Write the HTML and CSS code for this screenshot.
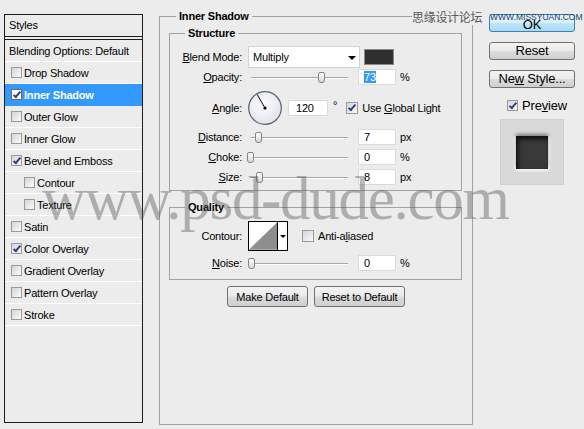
FILE: index.html
```html
<!DOCTYPE html>
<html lang="en">
<head>
<meta charset="UTF-8">
<title>Layer Style</title>
<link rel="stylesheet" href="styles.css">
</head>
<body>
<div class="dialog">
  <div class="styles">
    <div class="head">Styles</div>
    <div class="item">Blending Options: Default</div>
    <div class="item"><span class="cb"></span>Drop Shadow</div>
    <div class="item active"><span class="cb on"></span>Inner Shadow</div>
    <div class="item"><span class="cb"></span>Outer Glow</div>
    <div class="item"><span class="cb"></span>Inner Glow</div>
    <div class="item"><span class="cb on"></span>Bevel and Emboss</div>
    <div class="item sub-item"><span class="cb"></span>Contour</div>
    <div class="item sub-item"><span class="cb"></span>Texture</div>
    <div class="item"><span class="cb"></span>Satin</div>
    <div class="item"><span class="cb on"></span>Color Overlay</div>
    <div class="item"><span class="cb"></span>Gradient Overlay</div>
    <div class="item"><span class="cb"></span>Pattern Overlay</div>
    <div class="item"><span class="cb"></span>Stroke</div>
  </div>

  <fieldset class="group main">
    <legend>Inner Shadow</legend>

    <fieldset class="group sub structure">
      <legend>Structure</legend>
      <div class="row">
        <span class="lbl"><u>B</u>lend Mode:</span>
        <div class="select">Multiply<span class="arrow"></span></div>
        <span class="swatch"></span>
      </div>
      <div class="row">
        <span class="lbl"><u>O</u>pacity:</span>
        <div class="slider"><span class="thumb" style="left:74px"></span></div>
        <span class="num"><span class="sel">73</span></span>
        <span class="unit">%</span>
      </div>
      <div class="row angle">
        <span class="lbl"><u>A</u>ngle:</span>
        <svg class="dial" width="34" height="34" viewBox="0 0 34 34">
          <defs>
            <radialGradient id="dialbg" cx="45%" cy="40%" r="60%">
              <stop offset="0" stop-color="#ffffff"/>
              <stop offset="1" stop-color="#e2e4ea"/>
            </radialGradient>
          </defs>
          <circle cx="17" cy="17" r="16.3" fill="url(#dialbg)" stroke="#566077" stroke-width="1.2"/>
          <line x1="17" y1="17" x2="9.2" y2="3.5" stroke="#000" stroke-width="1"/>
          <circle cx="17" cy="17" r="1.6" fill="#000"/>
        </svg>
        <span class="num wide">120</span>
        <span class="deg">°</span>
        <span class="cb big on"></span>
        <span class="cb-text">Use <u>G</u>lobal Light</span>
      </div>
      <div class="row">
        <span class="lbl"><u>D</u>istance:</span>
        <div class="slider"><span class="thumb" style="left:11px"></span></div>
        <span class="num">7</span>
        <span class="unit">px</span>
      </div>
      <div class="row">
        <span class="lbl"><u>C</u>hoke:</span>
        <div class="slider"><span class="thumb" style="left:3px"></span></div>
        <span class="num">0</span>
        <span class="unit">%</span>
      </div>
      <div class="row">
        <span class="lbl"><u>S</u>ize:</span>
        <div class="slider"><span class="thumb" style="left:12px"></span></div>
        <span class="num">8</span>
        <span class="unit">px</span>
      </div>
    </fieldset>

    <fieldset class="group sub quality">
      <legend>Quality</legend>
      <div class="row contour-row">
        <span class="lbl">Contour:</span>
        <div class="contour">
          <svg width="29" height="28" viewBox="0 0 29 28">
            <polygon points="0,28 29,0 29,28" fill="#8e8e8e"/>
          </svg>
          <span class="contour-drop"><span class="arrow small"></span></span>
        </div>
        <span class="cb big aa"></span>
        <span class="cb-text">Anti-a<u>l</u>iased</span>
      </div>
      <div class="row">
        <span class="lbl"><u>N</u>oise:</span>
        <div class="slider"><span class="thumb" style="left:4px"></span></div>
        <span class="num">0</span>
        <span class="unit">%</span>
      </div>
    </fieldset>

    <div class="defaults">
      <button class="btn make">Make Default</button>
      <button class="btn reset-def">Reset to Default</button>
    </div>
  </fieldset>

  <div class="side">
    <button class="btn big-btn ok">OK</button>
    <button class="btn big-btn">Reset</button>
    <button class="btn big-btn">Ne<u>w</u> Style...</button>
    <div class="preview-check"><span class="cb on"></span><span>Pre<u>v</u>iew</span></div>
    <div class="preview"><div class="swatch-preview"></div></div>
  </div>
</div>

<div class="wm-site">www.psd-dude.com</div>
<div class="wm-cn">思缘设计论坛</div>
<div class="wm-url">WWW.MISSYUAN.COM</div>
</body>
</html>
```

FILE: styles.css
```css
body {
  margin: 0;
  background-color: #ececec;
  font-family: "Liberation Sans", Arial, sans-serif;
  font-size: 11px;
  letter-spacing: -0.2px;
  color: #000;
  overflow: hidden;
}
.dialog {
  display: flex;
  align-items: flex-start;
  padding: 10px 0 0 4px;
  height: 429px;
  box-sizing: border-box;
}

/* left list of styles */
.styles {
  width: 139px;
  height: 409px;
  margin: 4px 16px 0 0;
  border: 1px solid #1c1c1c;
  box-sizing: border-box;
  flex: none;
}
.styles .head {
  height: 21px;
  line-height: 21px;
  padding-left: 4px;
  border-bottom: 4px double #1c1c1c;
}
.item {
  height: 21px;
  border-bottom: 1px solid #fff;
  display: flex;
  align-items: center;
  gap: 2px;
  padding-left: 4px;
}
.item .cb {
  margin-left: 2px;
}
.item.sub-item {
  padding-left: 17px;
}
.item.active {
  background-color: #3399ff;
  color: #fff;
  font-weight: bold;
  border-bottom-color: #3399ff;
}
.item.active .cb {
  background: #fff;
  border-color: #6b6b6b;
}

/* checkboxes */
.cb {
  position: relative;
  flex: none;
  width: 11px;
  height: 11px;
  box-sizing: border-box;
  border: 1px solid #9a9a9a;
  background: linear-gradient(135deg, #d4d4d4, #fbfbfb);
}
.cb.big {
  width: 12px;
  height: 12px;
}
.cb.on::after {
  content: "";
  position: absolute;
  left: 3px;
  top: 0;
  width: 2px;
  height: 6px;
  border: solid #2c3f8f;
  border-width: 0 2px 2px 0;
  transform: rotate(40deg);
}
.cb-text {
  margin-left: 4px;
}

/* group boxes */
.group {
  margin: 0;
  padding: 0;
  border: 1px solid #a2a2a2;
  min-width: 0;
  box-sizing: border-box;
}
.group legend {
  font-weight: bold;
  padding: 0 3px;
  line-height: 12px;
}
.main {
  width: 314px;
  height: 415px;
  padding: 5px 9px 0;
  margin-right: 16px;
  flex: none;
}
.main > legend {
  margin-left: 7px;
}
.sub {
  width: 293px;
}
.sub > legend {
  margin-left: 15px;
}
.structure {
  padding: 8px 0 3px;
}
.quality {
  margin-top: 10px;
  padding: 8px 0 6px;
}

.row {
  display: flex;
  align-items: center;
  height: 20px;
}
.lbl {
  width: 72px;
  margin-right: 6px;
  text-align: right;
  flex: none;
}
.row.angle {
  height: 40px;
  padding-top: 2px;
  box-sizing: border-box;
}
.contour-row {
  height: 30px;
  margin-bottom: 2px;
}

.select {
  width: 112px;
  height: 22px;
  box-sizing: border-box;
  background: #fff;
  border: 1px solid #d2d2d2;
  display: flex;
  align-items: center;
  padding-left: 4px;
}
.arrow {
  margin: 1px 3px 0 auto;
  border-left: 4px solid transparent;
  border-right: 4px solid transparent;
  border-top: 4px solid #000;
}
.arrow.small {
  margin: 0;
  border-left-width: 3px;
  border-right-width: 3px;
  border-top-width: 3px;
}
.swatch {
  width: 30px;
  height: 16px;
  margin-left: 4px;
  background: #2f2f2f;
  border: 1px solid #8a8a8a;
  box-sizing: border-box;
}

.slider {
  position: relative;
  width: 104px;
  height: 13px;
  flex: none;
}
.slider::before {
  content: "";
  position: absolute;
  left: 3px;
  right: 4px;
  top: 6px;
  height: 1px;
  background: #a6a6a6;
  box-shadow: 0 1px 0 #fff;
}
.thumb {
  position: absolute;
  top: 1px;
  width: 7px;
  height: 11px;
  margin-left: -4px;
  box-sizing: border-box;
  border: 1px solid #858585;
  border-radius: 2px 2px 3px 3px;
  background: linear-gradient(#ffffff, #d6d6d6);
}

.num {
  width: 38px;
  height: 16px;
  margin-left: 6px;
  box-sizing: border-box;
  background: #fff;
  border: 1px solid #dadada;
  padding-left: 5px;
  line-height: 14px;
  flex: none;
}
.num.wide {
  width: 40px;
  margin-left: 6px;
  padding-left: 7px;
}
.num .sel {
  background: #3399ff;
  color: #fff;
}
.unit {
  margin-left: 4px;
}
.deg {
  margin: 0 0 7px 5px;
}
.angle .cb {
  margin-left: 9px;
}
.dial {
  display: block;
  flex: none;
}

.contour {
  width: 40px;
  height: 30px;
  box-sizing: border-box;
  border: 1px solid #000;
  background: #fff;
  display: flex;
  flex: none;
}
.contour svg {
  display: block;
}
.contour-drop {
  width: 9px;
  border-left: 1px solid #000;
  display: flex;
  align-items: center;
  justify-content: center;
}
.cb.aa {
  margin-left: 14px;
}

/* buttons */
.defaults {
  display: flex;
  justify-content: center;
  gap: 6px;
  margin-top: 6px;
}
.btn {
  height: 21px;
  padding: 0;
  font-family: inherit;
  font-size: 11px;
  letter-spacing: -0.2px;
  color: #000;
  border: 1px solid #707070;
  border-radius: 3px;
  background: linear-gradient(#f3f3f3 0%, #ebebeb 48%, #dcdcdc 52%, #cfcfcf 100%);
}
.btn.make {
  width: 81px;
}
.btn.reset-def {
  width: 91px;
}

.side {
  width: 86px;
  margin-top: 4px;
  display: flex;
  flex-direction: column;
  align-items: center;
  flex: none;
}
.big-btn {
  width: 86px;
  height: 18px;
  margin-bottom: 10px;
  font-size: 13px;
  line-height: 14px;
}
.btn.ok {
  border-color: #3c7fb1;
  padding-top: 3px;
  background: linear-gradient(#eaf6fd 0%, #d9f0fc 48%, #bee6fd 52%, #a7d9f5 100%);
}
.preview-check {
  display: flex;
  align-items: center;
  gap: 4px;
  font-size: 13px;
  margin: 1px 0 0 10px;
  height: 12px;
}
.preview {
  width: 64px;
  height: 66px;
  margin-top: 8px;
  box-sizing: border-box;
  background: #d9d9d9;
  border: 1px solid #cfcfcf;
  display: flex;
  align-items: center;
  justify-content: center;
}
.swatch-preview {
  width: 32px;
  height: 33px;
  background: #393939;
  box-shadow: inset 2px 3px 5px #0d0d0d, 0 -2px 3px rgba(0, 0, 0, 0.45), 0 2px 2px #fafafa, 2px 0 2px #fafafa, -2px 0 2px #fafafa;
}

/* watermarks over the screenshot */
.wm-site {
  position: absolute;
  left: 42px;
  top: 164px;
  font-family: "Liberation Serif", "Times New Roman", serif;
  font-size: 61px;
  letter-spacing: -1.3px;
  color: rgba(80, 80, 80, 0.4);
  white-space: nowrap;
}
.wm-cn {
  position: absolute;
  left: 412px;
  top: 8px;
  font-family: "Noto Sans CJK SC", sans-serif;
  font-size: 12px;
  letter-spacing: -0.3px;
  color: #5a5a5a;
  background: #ececec;
}
.wm-url {
  position: absolute;
  left: 490px;
  top: 12px;
  font-size: 8.5px;
  letter-spacing: 0;
  color: #1f3d66;
}
```
